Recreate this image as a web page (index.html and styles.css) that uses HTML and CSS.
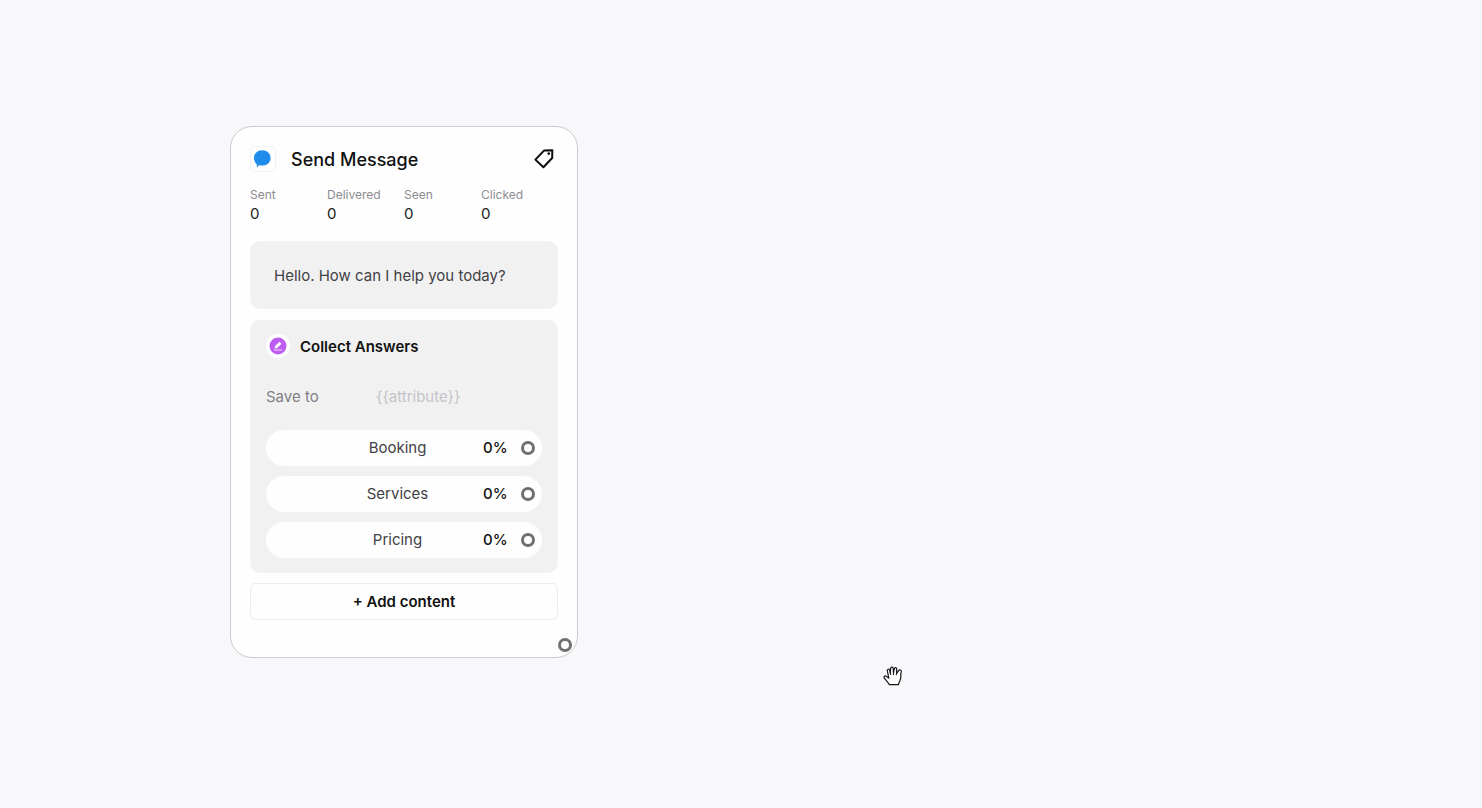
FILE: index.html
```html
<!DOCTYPE html>
<html lang="en">
<head>
    <meta charset="UTF-8">
    <meta name="viewport" content="width=device-width, initial-scale=1.0">
    <title>Flow Builder</title>
    <link rel="stylesheet" href="styles.css">
</head>
<body>
    <main class="canvas">
        <section class="node">
            <header class="node-header">
                <span class="node-icon">
                    <svg width="24" height="24" viewBox="0 0 24 24" aria-hidden="true">
                        <path fill="#1f8ceb" d="M11.3 3.2C16.1 3.2 19.6 6.6 19.6 10.9C19.6 15.2 16.1 18.6 11.3 18.6C10.1 18.6 9 18.4 8 18.2L5.9 20.4L5.8 17.3C4.2 15.9 3 13.5 3 10.9C3 6.6 6.5 3.2 11.3 3.2Z"/>
                    </svg>
                </span>
                <h1 class="node-title">Send Message</h1>
                <button type="button" class="tag-button" aria-label="Add tag">
                    <svg width="24" height="24" viewBox="0 0 24 24" aria-hidden="true">
                        <path fill="none" stroke="#0c0c0d" stroke-width="2" stroke-linejoin="round" d="M12.2 3.4L20.3 3.3L20.2 11L11.4 20.2L3.4 12.6Z"/>
                        <circle cx="16.8" cy="6.6" r="1.3" fill="#0c0c0d"/>
                    </svg>
                </button>
            </header>

            <dl class="stats">
                <div class="stat"><dt>Sent</dt><dd>0</dd></div>
                <div class="stat"><dt>Delivered</dt><dd>0</dd></div>
                <div class="stat"><dt>Seen</dt><dd>0</dd></div>
                <div class="stat"><dt>Clicked</dt><dd>0</dd></div>
            </dl>

            <p class="message">Hello. How can I help you today?</p>

            <div class="collect">
                <div class="collect-header">
                    <span class="collect-icon">
                        <svg width="24" height="24" viewBox="0 0 24 24" aria-hidden="true">
                            <circle cx="12" cy="12" r="8.5" fill="#bd5cf0"/>
                            <path fill="#fff" d="M8.6 14.6L9.2 12L13.5 7.7L15.5 9.7L11.2 14Z"/>
                            <path stroke="#f4dcff" d="M8 16H16"/>
                        </svg>
                    </span>
                    <h2 class="collect-title">Collect Answers</h2>
                </div>
                <div class="save-row">
                    <label for="attribute">Save to</label>
                    <input type="text" id="attribute" placeholder="{{attribute}}">
                </div>
                <ul class="answers">
                    <li class="answer">
                        <span class="answer-name">Booking</span>
                        <span class="answer-rate">0%</span>
                        <button type="button" class="port" aria-label="Connect Booking"></button>
                    </li>
                    <li class="answer">
                        <span class="answer-name">Services</span>
                        <span class="answer-rate">0%</span>
                        <button type="button" class="port" aria-label="Connect Services"></button>
                    </li>
                    <li class="answer">
                        <span class="answer-name">Pricing</span>
                        <span class="answer-rate">0%</span>
                        <button type="button" class="port" aria-label="Connect Pricing"></button>
                    </li>
                </ul>
            </div>

            <button type="button" class="add-content">+ Add content</button>
            <footer class="node-footer">
                <button type="button" class="port" aria-label="Connect next step"></button>
            </footer>
        </section>

        <svg class="hand" width="20" height="20" viewBox="0 0 20 20" aria-hidden="true">
            <path fill="#fff" stroke="#17191c" stroke-width="1.2" stroke-linejoin="round" stroke-linecap="round" d="M6.2 18.6C5.4 16.9 3.2 14.5 1.5 12.3C.2 10.6 2 9.3 3.5 10.4L5.8 12.2L4.4 5.2C4 3 6 2.4 6.6 4.2L7.4 7.5L7.6 2.7C7.6 .7 10 .6 10.2 2.5L10.5 7L11.4 2.6C11.8 .9 13.9 1.4 13.7 3.2L13.6 7.4L15.6 4.7C16.6 3.2 18.7 4 18.2 5.7C17.3 8.5 18.6 11 17 14.5C16.2 16.1 15.7 17.3 15.5 18.6Z"/>
            <path fill="none" stroke="#17191c" stroke-width="1.1" stroke-linecap="round" d="M7.4 7.5L7.7 8.5M10.5 6.5V8.5M13.6 7.4L13.3 8.7"/>
        </svg>
    </main>
</body>
</html>
```
FILE: styles.css
```css
* {
    box-sizing: border-box;
}

body {
    margin: 0;
    background-color: #f8f8fa;
    color: #111;
    font-family: Inter, "Liberation Sans", sans-serif;
    font-size: 15px;
    line-height: 20px;
}

h1, h2, p, dl, dd, ul {
    margin: 0;
    padding: 0;
}

button, input {
    font: inherit;
    color: inherit;
}

button {
    padding: 0;
    border: none;
    background: none;
    cursor: pointer;
}

svg {
    display: block;
}

.canvas {
    position: relative;
    min-height: 100vh;
    overflow: hidden;
    cursor: grab;
}

/* nodes are placed freely on the canvas */
.node {
    position: absolute;
    left: 230px;
    top: 126px;
    width: 348px;
    padding: 19px 19px 0;
    background-color: #fefefe;
    border: 1px solid #cacacf;
    border-radius: 22px;
}

.node-header {
    display: flex;
    align-items: center;
}

.node-icon {
    border: 1px solid #f2f2f4;
    border-radius: 5px;
}

.node-title {
    flex: 1;
    margin-left: 15px;
    padding-top: 2px;
    font-size: 18px;
    font-weight: 500;
    line-height: 24px;
}

.tag-button {
    margin-right: 2px;
}

.stats {
    display: grid;
    grid-template-columns: repeat(4, 1fr);
    margin-top: 14px;
}

.stat dt {
    color: #8d8d92;
    font-size: 12px;
    line-height: 18px;
}

.stat dd {
    color: #222;
    font-size: 15px;
    line-height: 20px;
}

.message {
    margin-top: 17px;
    padding: 25px 24px 23px;
    background-color: #f1f1f2;
    border-radius: 10px;
    color: #414144;
}

.collect {
    margin-top: 11px;
    padding: 14px 16px 15px;
    background-color: #f1f1f2;
    border-radius: 10px;
}

.collect-header {
    display: flex;
    align-items: center;
}

.collect-icon {
    background-color: #fff;
    border-radius: 50%;
}

.collect-title {
    margin-left: 10px;
    padding-top: 2px;
    font-size: 15px;
    font-weight: 600;
    line-height: 20px;
}

.save-row {
    display: grid;
    grid-template-columns: 110px 1fr;
    align-items: center;
    margin-top: 29px;
    color: #808083;
}

.save-row input {
    width: 100%;
    padding: 0;
    border: none;
    background: none;
    outline: none;
}

.save-row input::placeholder {
    color: #c4c4c8;
    opacity: 1;
}

.answers {
    display: grid;
    gap: 10px;
    margin-top: 23px;
    list-style: none;
}

.answer {
    display: grid;
    grid-template-columns: 74px 1fr 66px 21px;
    align-items: center;
    height: 36px;
    background-color: #fefefe;
    border-radius: 18px;
}

.answer-name {
    grid-column: 2;
    color: #414144;
    text-align: center;
}

.answer-rate {
    padding-left: 28px;
    font-weight: 500;
}

.port {
    width: 14px;
    height: 14px;
    background-color: #fff;
    border: 3px solid #707070;
    border-radius: 50%;
}

.add-content {
    width: 100%;
    height: 37px;
    margin-top: 10px;
    border: 1px solid #ececf1;
    border-radius: 5px;
    font-weight: 600;
}

.node-footer {
    display: flex;
    justify-content: flex-end;
    margin-right: -14px;
    padding: 18px 0 5px;
}

.hand {
    position: absolute;
    left: 883px;
    top: 666px;
}
```
